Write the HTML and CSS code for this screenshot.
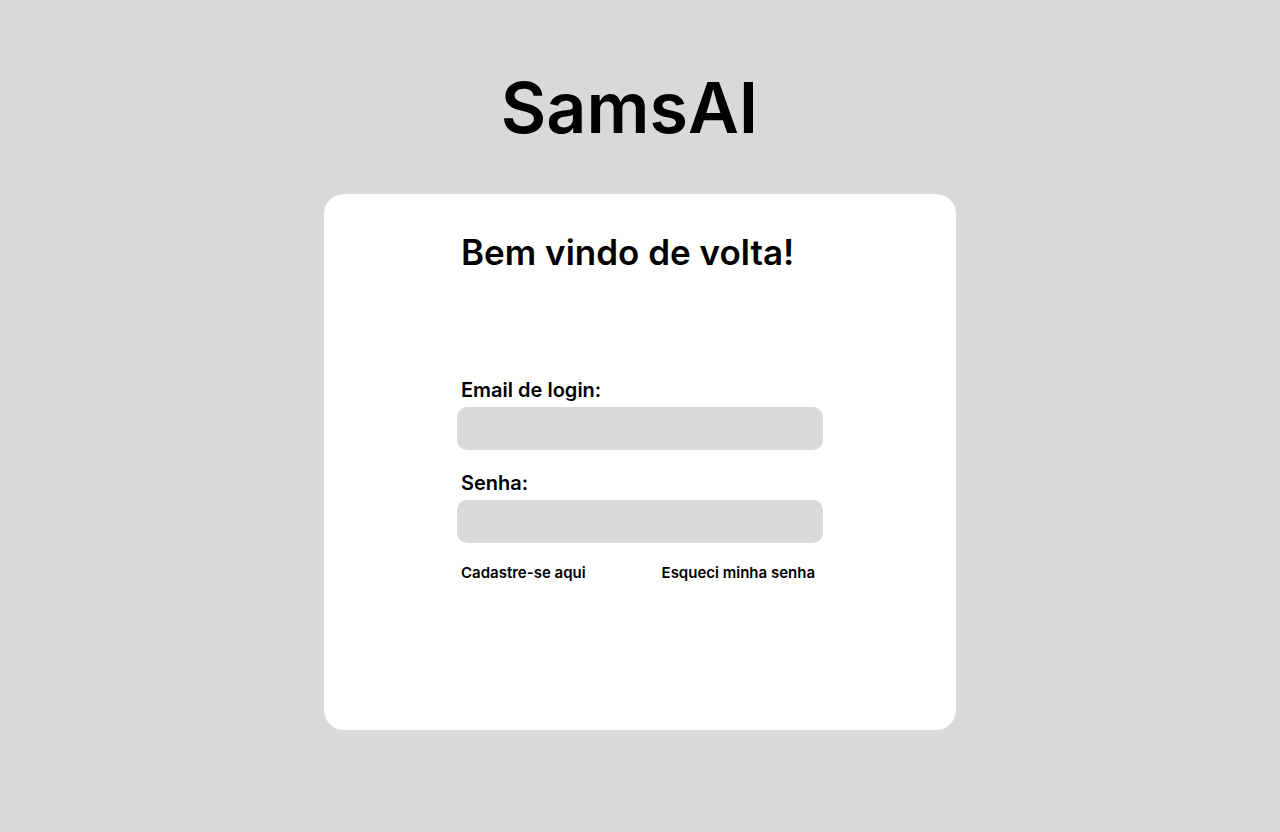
FILE: index.html
```html
<!DOCTYPE html>
<html lang="pt-BR">
<head>
<meta charset="utf-8">
<title>SamsAI</title>
<link rel="stylesheet" href="styles.css">
</head>
<body>
<main class="page">
  <h1 class="brand">SamsAI</h1>
  <section class="card">
    <div class="column">
      <h2 class="welcome">Bem vindo de volta!</h2>
      <form class="form">
        <label class="label" for="email">Email de login:</label>
        <input class="field" id="email" type="email">
        <label class="label label-second" for="senha">Senha:</label>
        <input class="field" id="senha" type="password">
        <div class="links">
          <a class="link" href="#">Cadastre-se aqui</a>
          <a class="link" href="#">Esqueci minha senha</a>
        </div>
      </form>
    </div>
  </section>
</main>
</body>
</html>
```
FILE: styles.css
```css
* { box-sizing: border-box; }
html, body { margin: 0; padding: 0; }
body {
  background: #d9d9d9;
  font-family: Inter, "Noto Sans", sans-serif;
  color: #000;
  min-height: 832px;
}
.page {
  display: flex;
  flex-direction: column;
  align-items: center;
  padding-top: 73px;
}
.brand {
  margin: 0;
  padding-right: 21px;
  font-size: 70px;
  font-weight: 600;
  line-height: 1;
  letter-spacing: 0;
}
.card {
  margin-top: 51px;
  width: 632px;
  height: 536px;
  background: #fff;
  border-radius: 20px;
  padding-top: 41px;
  display: flex;
  justify-content: center;
}
.column {
  width: 366px;
  display: flex;
  flex-direction: column;
}
.welcome {
  margin: 0;
  padding-left: 4px;
  font-size: 35px;
  font-weight: 600;
  line-height: 1;
}
.form {
  margin-top: 110px;
  display: flex;
  flex-direction: column;
}
.label {
  padding-left: 4px;
  font-size: 20px;
  font-weight: 600;
  line-height: 1;
  margin-bottom: 7px;
}
.label-second { margin-top: 23px; }
.field {
  display: block;
  width: 366px;
  height: 43px;
  border: none;
  border-radius: 10px;
  background: #d9d9d9;
  outline: none;
  font: inherit;
  padding: 0 12px;
}
.links {
  margin-top: 22px;
  display: flex;
  justify-content: space-between;
  padding: 0 8px 0 4px;
}
.link {
  color: #000;
  text-decoration: none;
  font-size: 15px;
  font-weight: 600;
  line-height: 1;
}
```
